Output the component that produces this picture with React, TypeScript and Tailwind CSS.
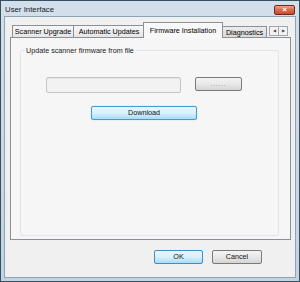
const TABS = [
  { name: "Scanner Upgrade", width: "w-[62px]" },
  { name: "Automatic Updates", width: "w-[72px]" },
]

export default function App() {
  return (
    <div className="h-[282px] w-[300px] bg-[#35505f] p-px font-['Liberation_Sans',Arial,sans-serif] text-[7.2px] leading-none text-black">
      <div className="flex h-full flex-col bg-gradient-to-b from-[#d3dfea] to-[#c2d3e2] px-[3px] pb-[3px]">
        {/* Title bar */}
        <div className="flex h-[15px] shrink-0 items-center justify-between">
          <span className="pl-[1px] pt-[2px] text-[7.8px] text-[#111c26]">User Interface</span>
          <div className="mr-[1px] mt-[2px] flex h-[10px] w-[21px] items-center justify-center rounded-[2px] border border-[#6d2a1c] bg-gradient-to-b from-[#eba48f] via-[#d9694b] to-[#c8492c] text-[8px] font-bold text-white">
            ×
          </div>
        </div>

        {/* Client area */}
        <div className="flex flex-1 flex-col border border-[#8ea3b6] bg-[#f0f0f0] px-[5px] pt-[5px]">
          {/* Tab strip */}
          <div className="flex h-[15px] items-end pl-[2px]">
            {TABS.map((tab) => (
              <div
                key={tab.name}
                className={`${tab.width} -mr-px flex h-[12px] items-center justify-center border border-b-0 border-[#8c8f96] bg-gradient-to-b from-[#f7f7f7] to-[#e6e6e6] pt-[1px]`}
              >
                {tab.name}
              </div>
            ))}
            <div className="relative z-10 -mb-px -ml-[1px] -mr-[1px] flex h-[16px] w-[80px] items-center justify-center border border-b-0 border-[#8c8f96] bg-[#f8f8f8]">
              Firmware Installation
            </div>
            <div className="flex h-[11px] w-[45px] items-center justify-center border border-b-0 border-[#8c8f96] bg-gradient-to-b from-[#ececec] to-[#dadada] pt-[1px]">
              Diagnostics
            </div>
            {/* Scroll arrows */}
            <div className="mb-[1px] ml-[2px] flex h-[10px]">
              <div className="flex w-[10px] items-center justify-center border border-[#a3a6ad] bg-[#f2f2f2] text-[4px] text-[#444]">
                ◀
              </div>
              <div className="-ml-px flex w-[10px] items-center justify-center border border-[#a3a6ad] bg-[#f2f2f2] text-[4px] text-[#444]">
                ▶
              </div>
            </div>
          </div>

          {/* Tab panel */}
          <div className="h-[203px] w-[281px] border border-[#8c8f96] bg-[#f6f6f6] pl-[9px] pr-[11px] pt-[12px]">
            <div className="relative h-[186px] rounded-[2px] border border-[#e2e5e8] pl-[25px] pt-[26px]">
              <span className="absolute left-[3px] top-[-4px] bg-[#f6f6f6] px-[2px] text-[#1a1a1a]">
                Update scanner firmware from file
              </span>
              <div className="flex items-start">
                <div className="h-[16px] w-[135px] rounded-[2px] border border-[#c6c6c6] bg-[#f2f2f2] shadow-[inset_0_1px_0_#e4e4e4]" />
                <button className="ml-[14px] flex h-[14px] w-[47px] items-center justify-center rounded-[2px] border border-[#7a7a7a] bg-gradient-to-b from-[#f3f3f3] via-[#e9e9e9] to-[#d4d4d4] text-[6px] tracking-[1px] text-[#555]">
                  ......
                </button>
              </div>
              <button className="ml-[45px] mt-[13px] flex h-[14px] w-[106px] items-center justify-center rounded-[2px] border border-[#3c9fd4] bg-gradient-to-b from-[#eaf6fd] via-[#d9f0fc] to-[#a9dbf6] shadow-[0_0_1px_#6cc6f0] text-[#111]">
                Download
              </button>
            </div>
          </div>

          {/* Dialog buttons */}
          <div className="flex justify-end gap-[9px] pr-[28px] pt-[10px]">
            <button className="flex h-[14px] w-[49px] items-center justify-center rounded-[2px] border border-[#3c8fc4] bg-gradient-to-b from-[#eaf6fd] via-[#d9f0fc] to-[#a9dbf6] text-[#111]">
              OK
            </button>
            <button className="flex h-[14px] w-[50px] items-center justify-center rounded-[2px] border border-[#7a7a7a] bg-gradient-to-b from-[#f3f3f3] via-[#e9e9e9] to-[#d4d4d4] text-[#111]">
              Cancel
            </button>
          </div>
        </div>
      </div>
    </div>
  )
}
